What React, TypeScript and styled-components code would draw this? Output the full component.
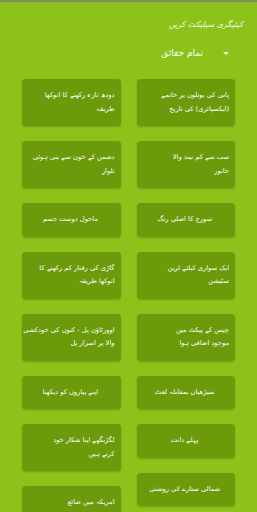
import React from 'react'
import styled, { createGlobalStyle } from 'styled-components'

const GlobalStyle = createGlobalStyle`
    html, body {
        margin: 0;
        padding: 0;
        background: #8dc21b;
    }
    body {
        font-family: 'DejaVu Sans', sans-serif;
        overflow: hidden;
    }
`

const Screen = styled.div`
    width: 257px;
    height: 512px;
    overflow: hidden;
    background: #8dc21b;
    border-top: 2px solid #7f8f5e;
    box-sizing: border-box;
`

const Header = styled.div`
    direction: rtl;
    padding: 17px 14px 0 0;
    color: #f4f9e8;
    font-size: 8px;
    line-height: 12px;
    font-style: italic;
`

const Picker = styled.div`
    direction: rtl;
    display: flex;
    align-items: center;
    gap: 20px;
    padding: 10px 28px 0 0;
    height: 24px;
    color: #fff;
    font-size: 9px;
`

const Caret = styled.span`
    width: 0;
    height: 0;
    border-left: 3px solid transparent;
    border-right: 3px solid transparent;
    border-top: 3px solid #eef6dc;
`

const Grid = styled.div`
    direction: rtl;
    display: flex;
    gap: 16px;
    padding: 14px 22px 0;
`

const Column = styled.div`
    flex: 1;
    min-width: 0;
    display: flex;
    flex-direction: column;
    gap: 15px;
`

const Card = styled.div<{ single: boolean }>`
    background: #6b9a0b;
    border-radius: 4px;
    box-shadow: 0 1px 2px rgba(60, 90, 0, 0.35);
    padding: 10px 6px 10px 4px;
    color: #fff;
    font-size: 6.7px;
    line-height: 13.5px;
    text-align: ${(props) => (props.single ? 'center' : 'right')};
    white-space: nowrap;
    overflow: hidden;
`

const rightColumn: string[][] = [
    ['پانی کی بوتلوں پر خاتمے', '(ایکسپائری) کی تاریخ'],
    ['سب سے کم نیند والا', 'جانور'],
    ['سورج کا اصلی رنگ'],
    ['ایک سواری کیلئے ٹرین', 'سٹیشن'],
    ['چپس کے پیکٹ میں', 'موجود اضافی ہوا'],
    ['سیڑھیاں بمقابلہ لفٹ'],
    ['پہلے دانت'],
    ['شمالی ستارے کی روشنی'],
]

const leftColumn: string[][] = [
    ['دودھ تازہ رکھنے کا انوکھا', 'طریقہ'],
    ['دشمن کے خون سے بنی ہوئی', 'تلوار'],
    ['ماحول دوست جسم'],
    ['گاڑی کی رفتار کم رکھنے کا', 'انوکھا طریقہ'],
    ['اوورٹاؤن پل - کتوں کی خودکشی', 'والا پر اسرار پل'],
    ['اپنے پیاروں کو دیکھنا'],
    ['لگڑبگھے اپنا شکار خود', 'کرتے ہیں'],
    ['امریکہ میں ضائع', 'ہونے والا کھانا'],
]

const FactColumn: React.FC<{ items: string[][] }> = ({ items }) => (
    <Column>
        {items.map((lines, i) => (
            <Card key={i} single={lines.length === 1}>
                {lines.map((line, j) => (
                    <div key={j}>{line}</div>
                ))}
            </Card>
        ))}
    </Column>
)

export default function App() {
    return (
        <Screen>
            <GlobalStyle />
            <Header>کیٹیگری سیلیکٹ کریں</Header>
            <Picker>
                <Caret />
                <span>تمام حقائق</span>
            </Picker>
            <Grid>
                <FactColumn items={rightColumn} />
                <FactColumn items={leftColumn} />
            </Grid>
        </Screen>
    )
}
